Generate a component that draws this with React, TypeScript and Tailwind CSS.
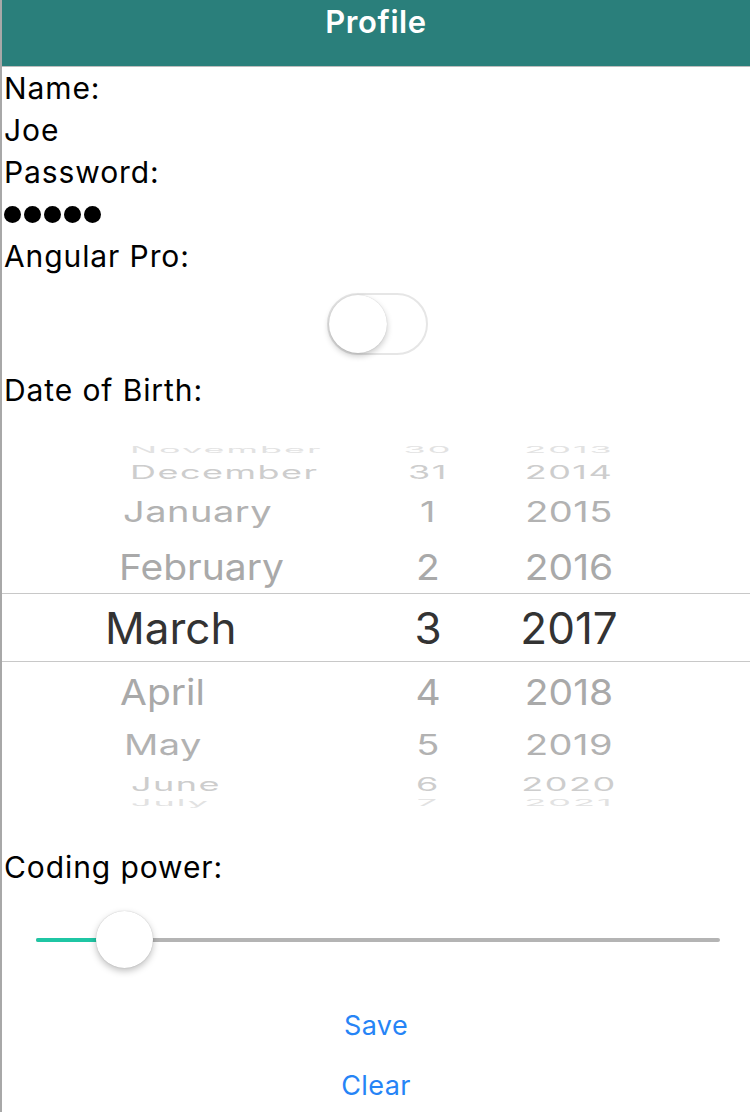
import React from 'react';

type Row = {
  h: number;
  size: number;
  scale: number;
  color: string;
  track: string;
  month: string;
  mpad: number;
  day: string;
  year: string;
};

// wheel rows, top to bottom; heights give the fake 3D spacing
const rows: Row[] = [
  { h: 19, size: 36, scale: 0.25, color: 'text-[#e2e2e2]', track: 'tracking-[2px]', month: 'November', mpad: 130, day: '30', year: '2013' },
  { h: 26, size: 36, scale: 0.5, color: 'text-[#cdcdcd]', track: 'tracking-[1.5px]', month: 'December', mpad: 130, day: '31', year: '2014' },
  { h: 54, size: 38, scale: 0.74, color: 'text-[#b2b2b2]', track: 'tracking-[0.5px]', month: 'January', mpad: 123, day: '1', year: '2015' },
  { h: 54, size: 39, scale: 0.92, color: 'text-[#a9a9a9]', track: 'tracking-normal', month: 'February', mpad: 119, day: '2', year: '2016' },
  { h: 69, size: 44, scale: 1, color: 'text-[#333333]', track: 'tracking-normal', month: 'March', mpad: 105, day: '3', year: '2017' },
  { h: 58, size: 39, scale: 0.92, color: 'text-[#a9a9a9]', track: 'tracking-normal', month: 'April', mpad: 120, day: '4', year: '2018' },
  { h: 50, size: 38, scale: 0.74, color: 'text-[#b2b2b2]', track: 'tracking-[0.5px]', month: 'May', mpad: 124, day: '5', year: '2019' },
  { h: 27, size: 36, scale: 0.5, color: 'text-[#cdcdcd]', track: 'tracking-[1.5px]', month: 'June', mpad: 131, day: '6', year: '2020' },
  { h: 12, size: 36, scale: 0.25, color: 'text-[#e2e2e2]', track: 'tracking-[2px]', month: 'July', mpad: 131, day: '7', year: '2021' },
];

function PickerRow({ r }: { r: Row }) {
  const selected = r.month === 'March';
  return (
    <div
      className={`flex items-center overflow-visible ${r.color} ${r.track} ${selected ? 'border-y border-[#c8c8c8]' : ''}`}
      style={{ height: r.h, fontSize: r.size, lineHeight: 1 }}
    >
      <div className="w-[358px] shrink-0" style={{ paddingLeft: r.mpad }}>
        <span className="inline-block" style={{ transform: `scaleY(${r.scale})` }}>{r.month}</span>
      </div>
      <div className="w-[140px] shrink-0 text-center">
        <span className="inline-block" style={{ transform: `scaleY(${r.scale})` }}>{r.day}</span>
      </div>
      <div className="w-[142px] shrink-0 text-center">
        <span className="inline-block" style={{ transform: `scaleY(${r.scale})` }}>{r.year}</span>
      </div>
    </div>
  );
}

export default function App() {
  return (
    <div
      className="w-[750px] h-[1112px] overflow-hidden bg-white border-l-2 border-[#a8a8a8] text-black"
      style={{ fontFamily: "Inter, 'Liberation Sans', sans-serif" }}
    >
      {/* header */}
      <div className="h-[67px] bg-[#2a7f7b] border-b border-[#bdbdbd] text-center">
        <span className="text-white text-[31px] font-semibold leading-[44px] tracking-[0.6px]">Profile</span>
      </div>

      {/* form */}
      <div className="flex flex-col text-[30px] leading-[42px] tracking-[0.9px] pl-[2px]">
        <span>Name:</span>
        <span>Joe</span>
        <span>Password:</span>
        <div className="flex items-center gap-[3px] h-[42px]">
          <span className="w-[17px] h-[17px] rounded-full bg-black" />
          <span className="w-[17px] h-[17px] rounded-full bg-black" />
          <span className="w-[17px] h-[17px] rounded-full bg-black" />
          <span className="w-[17px] h-[17px] rounded-full bg-black" />
          <span className="w-[17px] h-[17px] rounded-full bg-black" />
        </div>
        <span>Angular Pro:</span>

        {/* switch */}
        <div className="flex justify-center mt-[16px] mb-[14px]">
          <div className="w-[101px] h-[62px] rounded-full border-2 border-[#e6e6e6] bg-white flex items-center">
            <div className="w-[58px] h-[58px] rounded-full bg-white shadow-[0_3px_6px_rgba(0,0,0,0.22),0_0_1px_rgba(0,0,0,0.2)]" />
          </div>
        </div>

        <span>Date of Birth:</span>
      </div>

      {/* date picker */}
      <div className="mt-[29px] -ml-[2px] h-[376px] overflow-hidden flex flex-col">
        {rows.map((r) => (
          <PickerRow key={r.month} r={r} />
        ))}
      </div>

      <div className="pl-[2px] mt-[30px] text-[30px] leading-[42px] tracking-[0.9px]">Coding power:</div>

      {/* slider */}
      <div className="mt-[13px] h-[78px] pl-[34px] pr-[30px] flex items-center">
        <div className="relative w-full h-[4px] rounded-full bg-[#b4b4b4]">
          <div className="absolute left-0 top-0 h-[4px] w-[80px] rounded-full bg-[#1fc6a4]" />
          <div className="absolute left-[60px] top-[-27px] w-[57px] h-[57px] rounded-full bg-white shadow-[0_3px_7px_rgba(0,0,0,0.25),0_0_1px_rgba(0,0,0,0.25)]" />
        </div>
      </div>

      {/* buttons */}
      <div className="mt-[17px] flex flex-col items-center text-[27px] tracking-[0.4px] text-[#2684f6]">
        <span className="h-[60px] leading-[60px]">Save</span>
        <span className="h-[60px] leading-[60px]">Clear</span>
      </div>
    </div>
  );
}
